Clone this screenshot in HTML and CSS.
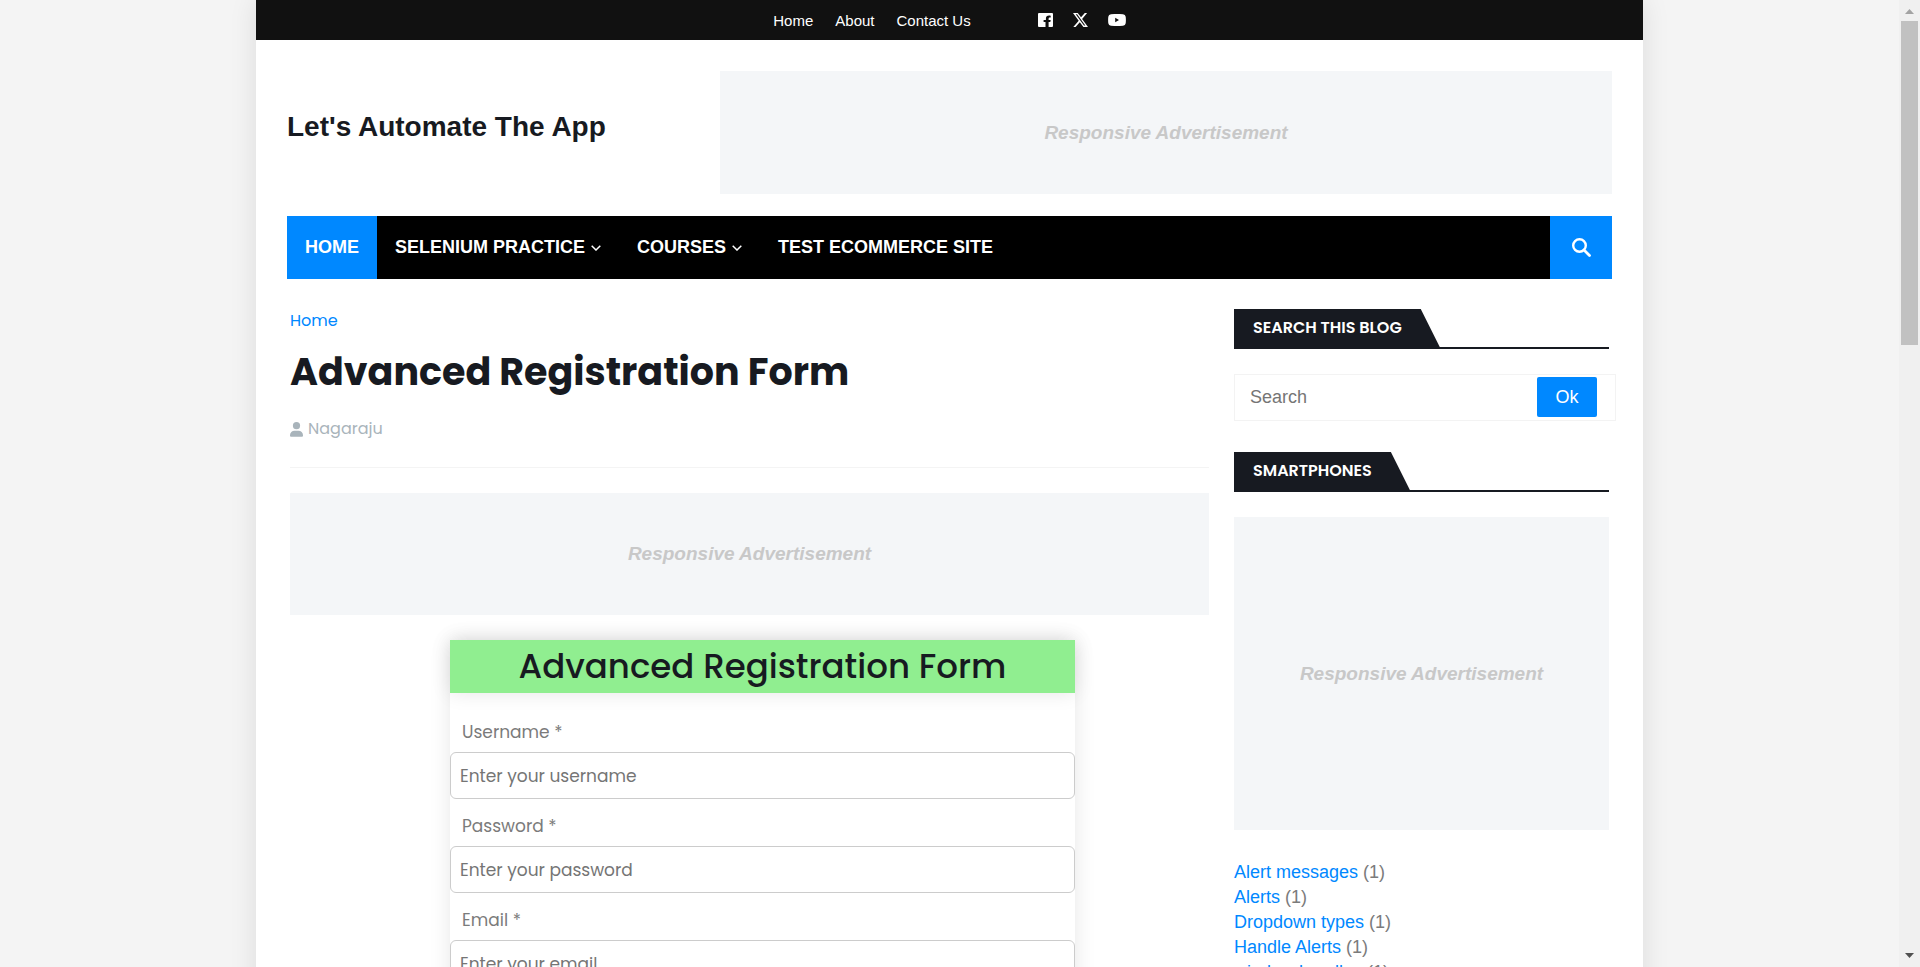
FILE: index.html
```html
<!DOCTYPE html>
<html lang="en">
<head>
<meta charset="utf-8">
<meta name="viewport" content="width=device-width, initial-scale=1">
<title>Advanced Registration Form</title>
<link rel="stylesheet" href="styles.css">
</head>
<body>
<div class="window">
  <div class="scroller">
    <div class="outer">
      <div class="topbar">
        <nav class="toplinks" aria-label="Pages">
          <a href="#">Home</a>
          <a href="#">About</a>
          <a href="#">Contact Us</a>
        </nav>
        <div class="social">
          <a href="#" aria-label="Facebook"><svg width="15" height="14" viewBox="0 0 15 14"><path fill="#fff" d="M1 0h13a1 1 0 0 1 1 1v12a1 1 0 0 1-1 1h-3.400V9.100h1.700l.4-2.200h-2.100V5.900c0-.9.400-1.300 1.300-1.300h.8V2.700c-.4-.1-1-.2-1.600-.2-2.100 0-3.200 1.100-3.200 3.200v1.200H5.600v2.200h1.900V14H1a1 1 0 0 1-1-1V1a1 1 0 0 1 1-1z"/></svg></a>
          <a href="#" aria-label="X"><svg width="15" height="14" viewBox="0 0 15 14"><path fill="#fff" fill-rule="evenodd" d="M11.800 0h2.300L9.100 5.900 15 14h-4.600L6.800 9.200 2.600 14H.3l5.400-6.300L0 0h4.700L8 4.300zM11 12.600h1.300L4.100 1.300H2.700z"/></svg></a>
          <a href="#" aria-label="YouTube"><svg width="18" height="12" viewBox="0 0 18 12"><path fill="#fff" fill-rule="evenodd" d="M3 .2Q9-.3 15 .2q2.400.1 2.700 2.500.4 3.300 0 6.600Q17.400 11.700 15 11.800q-6 .5-12 0Q.6 11.700.3 9.300q-.4-3.300 0-6.600Q.6.300 3 .2zM7.200 3.800v4.400L11 6z"/></svg></a>
        </div>
      </div>

      <header class="header">
        <a class="logo" href="#">Let's Automate The App</a>
        <div class="ad ad-header">Responsive Advertisement</div>
      </header>

      <nav class="menu" aria-label="Main">
        <a class="menu-item active" href="#">HOME</a>
        <a class="menu-item" href="#">SELENIUM PRACTICE
          <svg width="10" height="6" viewBox="0 0 10 6"><path d="M.7.700 5 5 9.300.7" fill="none" stroke="#fff" stroke-width="1.500"/></svg></a>
        <a class="menu-item" href="#">COURSES
          <svg width="10" height="6" viewBox="0 0 10 6"><path d="M.7.700 5 5 9.300.7" fill="none" stroke="#fff" stroke-width="1.500"/></svg></a>
        <a class="menu-item" href="#">TEST ECOMMERCE SITE</a>
        <button class="menu-search" type="button" aria-label="Search"><svg width="19" height="19" viewBox="0 0 19 19"><circle cx="7.500" cy="7.500" r="6.300" fill="none" stroke="#fff" stroke-width="2.400"/><path d="m12 12 5.500 5.500" stroke="#fff" stroke-width="2.800" stroke-linecap="round"/></svg></button>
      </nav>

      <div class="content">
        <main class="main">
          <a class="crumb" href="#">Home</a>
          <h1 class="title">Advanced Registration Form</h1>
          <p class="meta"><svg width="13" height="15" viewBox="0 0 13 15"><circle cx="6.500" cy="3.700" r="3.600" fill="#a9b4bb"/><path fill="#a9b4bb" d="M4.500 8.700h4A4.500 4.500 0 0 1 13 13.200v.6a1 1 0 0 1-1 1H1a1 1 0 0 1-1-1v-.6a4.500 4.500 0 0 1 4.500-4.500z"/></svg>Nagaraju</p>
          <div class="ad ad-post">Responsive Advertisement</div>
          <form class="form">
            <h2 class="form-title">Advanced Registration Form</h2>
            <div class="fields">
              <label for="username">Username *</label>
              <input id="username" type="text" placeholder="Enter your username">
              <label for="password">Password *</label>
              <input id="password" type="password" placeholder="Enter your password">
              <label for="email">Email *</label>
              <input id="email" type="email" placeholder="Enter your email">
            </div>
          </form>
        </main>

        <aside class="sidebar">
          <h3 class="widget-title"><span>SEARCH THIS BLOG</span></h3>
          <form class="search">
            <input type="search" placeholder="Search" aria-label="Search this blog">
            <button type="button">Ok</button>
          </form>
          <h3 class="widget-title"><span>SMARTPHONES</span></h3>
          <div class="ad ad-side">Responsive Advertisement</div>
          <ul class="labels">
            <li><a href="#">Alert messages</a> (1)</li>
            <li><a href="#">Alerts</a> (1)</li>
            <li><a href="#">Dropdown types</a> (1)</li>
            <li><a href="#">Handle Alerts</a> (1)</li>
            <li><a href="#">window handles</a> (1)</li>
          </ul>
        </aside>
      </div>
    </div>
  </div>
  <div class="scrollbar" aria-hidden="true">
    <svg width="9" height="5" viewBox="0 0 9 5"><path fill="#a3a3a3" d="M0 5 4.500 0 9 5z"/></svg>
    <div class="track"><div class="thumb"></div></div>
    <svg width="9" height="5" viewBox="0 0 9 5"><path fill="#505050" d="M0 0h9L4.500 5z"/></svg>
  </div>
</div>
</body>
</html>
```

FILE: styles.css
```css
* { box-sizing: border-box; }

body {
  margin: 0;
  background: #f4f4f4;
  color: #7b7b7b;
  font-family: "Liberation Sans", Arial, sans-serif;
  font-size: 18px;
}

a { color: #0088ff; text-decoration: none; }
h1, h2, h3, p, ul { margin: 0; padding: 0; }
svg { flex: none; }

.window { display: grid; grid-template-columns: 1fr 21px; height: 100vh; }
.scroller { overflow-x: hidden; overflow-y: auto; scrollbar-width: none; }

.outer {
  max-width: 1387px;
  margin: 0 auto;
  padding-bottom: 40px;
  background: #fff;
  box-shadow: 0 0 26px rgba(0, 0, 0, 0.1);
}

/* top strip */
.topbar {
  display: flex;
  align-items: center;
  justify-content: center;
  gap: 67px;
  height: 40px;
  background: #111;
}
.toplinks { display: flex; gap: 22px; }
.toplinks a { color: #fff; font-size: 15px; }
.social { display: flex; align-items: center; gap: 20px; }
.social a { display: flex; }

/* header */
.header {
  display: flex;
  align-items: flex-start;
  justify-content: space-between;
  padding: 31px 31px 22px;
}
.logo {
  padding-top: 36px;
  color: #171a21;
  font-size: 28px;
  font-weight: 700;
  line-height: 40px;
}

.ad {
  display: flex;
  align-items: center;
  justify-content: center;
  height: 123px;
  background: #f4f6f8;
  color: #c8c8c8;
  font-size: 19px;
  font-style: italic;
  font-weight: 700;
}
.ad-header { width: 892px; }

/* menu */
.menu { display: flex; height: 63px; margin: 0 31px; background: #000; }
.menu-item {
  display: flex;
  align-items: center;
  gap: 6px;
  padding: 0 18px;
  color: #fff;
  font-size: 18px;
  font-weight: 700;
}
.menu-item.active, .menu-search { background: #0088ff; }
.menu-search {
  display: flex;
  align-items: center;
  justify-content: center;
  width: 62px;
  margin-left: auto;
  padding: 0;
  border: 0;
}

/* columns */
.content {
  display: grid;
  grid-template-columns: minmax(0, 1fr) 375px;
  gap: 25px;
  padding: 30px 34px 0;
}
.main { font-family: Poppins, Inter, sans-serif; font-size: 16px; }
.crumb { display: block; line-height: 24px; }
.title { margin-top: 14px; color: #171a21; font-size: 38px; line-height: 50px; }
.meta {
  display: flex;
  align-items: center;
  gap: 5px;
  padding: 20px 0 26px;
  border-bottom: 1px solid #f4f4f4;
  color: #a9b4bb;
  line-height: 24px;
}
.ad-post { height: 122px; margin: 25px 0; font-family: "Liberation Sans", Arial, sans-serif; }

/* registration form */
.form { width: 68%; margin-left: 160px; box-shadow: 0 0 20px rgba(0, 0, 0, 0.1); }
.form-title {
  background: #90ee90;
  box-shadow: 0 0 20px rgba(0, 0, 0, 0.1);
  color: #171a21;
  font-size: 34px;
  font-weight: 500;
  line-height: 53px;
  text-align: center;
}
.fields {
  display: flex;
  flex-direction: column;
  padding: 17px 0 30px;
  font-size: 17px;
}
.fields label { padding: 10px 12px 8px; line-height: 24px; }
.fields input {
  width: 100%;
  height: 47px;
  margin-bottom: 5px;
  padding: 0 9px;
  border: 1px solid #ccc;
  border-radius: 6px;
  background: #fff;
  font: inherit;
}
input::placeholder { color: #757575; }

/* sidebar */
.widget-title {
  display: flex;
  border-bottom: 2px solid #171a21;
  color: #fff;
  font-family: Poppins, Inter, sans-serif;
  font-size: 16px;
  font-weight: 600;
  line-height: 38px;
}
.widget-title span {
  padding: 0 38px 0 19px;
  background: #171a21;
  clip-path: polygon(0 0, calc(100% - 19px) 0, 100% 100%, 0 100%);
}
.search {
  display: flex;
  align-items: flex-start;
  height: 47px;
  margin: 25px -7px 31px 0;
  padding: 2px 18px 0 15px;
  border: 1px solid #f3f3f3;
}
.search input {
  flex: 1;
  min-width: 0;
  height: 40px;
  padding: 0;
  border: 0;
  background: none;
  font: inherit;
}
.search button {
  width: 60px;
  height: 40px;
  border: 0;
  border-radius: 2px;
  background: #0088ff;
  color: #fff;
  font: inherit;
}
.ad-side { height: 313px; margin: 25px 0 30px; }
.labels { list-style: none; line-height: 25px; }

/* window scrollbar */
.scrollbar {
  display: flex;
  flex-direction: column;
  align-items: center;
  padding: 9px 2px;
  background: #f0f0f0;
}
.track { flex: 1; align-self: stretch; padding: 7px 0; }
.thumb { height: 35%; background: #c1c1c1; }
```
